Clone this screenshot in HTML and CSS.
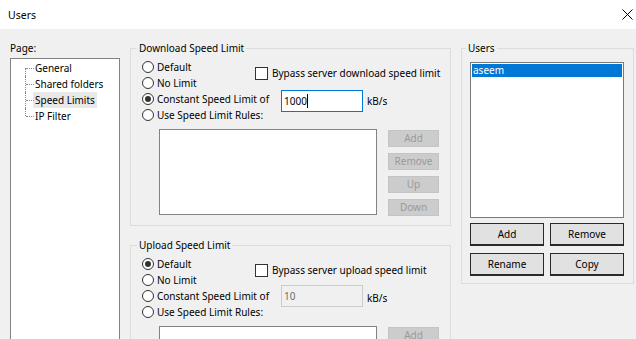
FILE: index.html
```html
<!DOCTYPE html>
<html>
<head>
<meta charset="utf-8">
<title>Users</title>
<link rel="stylesheet" href="styles.css">
</head>
<body>
<div class="window">
  <div class="titlebar">
    <span class="title">Users</span>
    <svg class="close" width="11" height="11" viewBox="0 0 11 11"><path d="M0.5 0.5 L10.5 10.5 M10.5 0.5 L0.5 10.5" stroke="#000" stroke-width="1" fill="none"/></svg>
  </div>
  <div class="main">
    <div class="pagecol">
      <div class="pagelabel">Page:</div>
      <div class="tree">
        <ul>
          <li><span>General</span></li>
          <li><span>Shared folders</span></li>
          <li><span class="sel">Speed Limits</span></li>
          <li><span>IP Filter</span></li>
        </ul>
      </div>
    </div>
    <div class="midcol">
      <fieldset class="group speed">
        <legend>Download Speed Limit</legend>
        <div class="opts">
          <label class="radio r1"><span class="dot"></span>Default</label>
          <label class="radio r2"><span class="dot"></span>No Limit</label>
          <label class="radio r3"><span class="dot on"></span>Constant Speed Limit of</label>
          <label class="radio r4"><span class="dot"></span>Use Speed Limit Rules:</label>
          <label class="check"><span class="box"></span>Bypass server download speed limit</label>
          <div class="input focus"><span class="caret">1000</span></div>
          <span class="unit">kB/s</span>
        </div>
        <div class="rules">
          <div class="list"></div>
          <div class="sidebtns">
            <div class="dbtn">Add</div>
            <div class="dbtn">Remove</div>
            <div class="dbtn">Up</div>
            <div class="dbtn">Down</div>
          </div>
        </div>
      </fieldset>
      <fieldset class="group speed up">
        <legend>Upload Speed Limit</legend>
        <div class="opts">
          <label class="radio r1"><span class="dot on"></span>Default</label>
          <label class="radio r2"><span class="dot"></span>No Limit</label>
          <label class="radio r3"><span class="dot"></span>Constant Speed Limit of</label>
          <label class="radio r4"><span class="dot"></span>Use Speed Limit Rules:</label>
          <label class="check"><span class="box"></span>Bypass server upload speed limit</label>
          <div class="input disabled">10</div>
          <span class="unit">kB/s</span>
        </div>
        <div class="rules">
          <div class="list"></div>
          <div class="sidebtns">
            <div class="dbtn">Add</div>
            <div class="dbtn">Remove</div>
            <div class="dbtn">Up</div>
            <div class="dbtn">Down</div>
          </div>
        </div>
      </fieldset>
    </div>
    <div class="rightcol">
      <fieldset class="group users">
        <legend>Users</legend>
        <div class="userlist">
          <div class="item selected">aseem</div>
        </div>
        <div class="ubtns">
          <div class="btn">Add</div>
          <div class="btn">Remove</div>
          <div class="btn">Rename</div>
          <div class="btn">Copy</div>
        </div>
      </fieldset>
    </div>
  </div>
</div>
</body>
</html>
```
FILE: styles.css
```css
* { box-sizing: border-box; }
html, body {
  margin: 0;
  padding: 0;
  width: 636px;
  height: 339px;
  overflow: hidden;
  background: #f0f0f0;
}
body {
  font-family: "Noto Sans", "Open Sans", sans-serif;
  font-size: 10px;
  line-height: 14px;
  color: #000;
}
.window { width: 636px; height: 339px; overflow: hidden; }

.titlebar {
  height: 29px;
  background: #fff;
  display: flex;
  align-items: center;
  justify-content: space-between;
  padding: 0 3px 0 8px;
}
.title { font-size: 10.5px; margin-top: 1px; }
.close { margin-top: -1px; }

.main {
  display: flex;
  padding: 12px 0 0 10px;
}

/* left column */
.pagecol { width: 110px; }
.pagelabel { height: 14px; }
.tree {
  margin-top: 3px;
  height: 300px;
  background: #fff;
  border: 1px solid #828282;
  padding-top: 1px;
}
.tree ul { list-style: none; margin: 0; padding: 0; }
.tree li {
  position: relative;
  height: 16px;
  line-height: 16px;
  padding-left: 22px;
}
.tree li span { padding: 1px 2px; }
.tree li span.sel { background: #e8e8e8; }
.tree li::before {
  content: "";
  position: absolute;
  left: 14px;
  top: 0;
  height: 16px;
  border-left: 1px dotted #8a8a8a;
}
.tree li:first-child::before { top: 8px; height: 8px; }
.tree li:last-child::before { height: 8px; }
.tree li::after {
  content: "";
  position: absolute;
  left: 15px;
  top: 8px;
  width: 8px;
  border-top: 1px dotted #8a8a8a;
}

/* group boxes */
fieldset.group {
  margin: 0;
  padding: 0;
  border: 1px solid #dcdcdc;
  min-width: 0;
}
fieldset.group legend {
  padding: 0 2px;
  margin-left: 6px;
  line-height: 14px;
}

.midcol { width: 321px; margin-left: 10px; }
.speed { padding: 4px 0 9px 0 !important; }
.speed.up { margin-top: 12px !important; }

.opts {
  display: grid;
  grid-template-columns: 113px 26px 82px auto;
  grid-template-rows: repeat(4, 16px);
  padding-left: 11px;
  align-items: center;
}
.radio {
  display: flex;
  align-items: center;
  white-space: nowrap;
  grid-column: 1 / 3;
}
.r1 { grid-row: 1; }
.r2 { grid-row: 2; }
.r3 { grid-row: 3; }
.r4 { grid-row: 4; }
.dot {
  width: 12px;
  height: 12px;
  border: 1px solid #333;
  border-radius: 50%;
  background: #fff;
  margin-right: 3px;
  flex: none;
  display: flex;
  align-items: center;
  justify-content: center;
}
.dot.on::after {
  content: "";
  width: 6px;
  height: 6px;
  border-radius: 50%;
  background: #333;
}
.check {
  grid-row: 1 / 3;
  grid-column: 2 / 5;
  align-self: start;
  margin-top: 7px;
  display: flex;
  align-items: center;
  white-space: nowrap;
}
.box {
  width: 13px;
  height: 13px;
  border: 1px solid #333;
  background: #fff;
  margin-right: 4px;
  flex: none;
}
.input {
  grid-row: 3;
  grid-column: 3;
  align-self: start;
  height: 22px;
  margin-top: -1px;
  padding: 3px 2px;
  line-height: 14px;
  background: #fff;
}
.input.focus { border: 1px solid #0078d7; }
.input.disabled {
  border: 1px solid #cccccc;
  background: #f0f0f0;
  color: #6d6d6d;
  margin-top: -3px;
}
.caret { border-right: 1px solid #000; padding-right: 0; }
.unit {
  grid-row: 3;
  grid-column: 4;
  margin-left: 4px;
  margin-top: 3px;
}

.rules {
  display: flex;
  margin-top: 6px;
  padding-left: 28px;
}
.list {
  width: 218px;
  height: 86px;
  background: #fff;
  border: 1px solid #828282;
}
.sidebtns {
  display: flex;
  flex-direction: column;
  gap: 6px;
  margin-left: 11px;
  margin-top: 1px;
}
.dbtn {
  width: 51px;
  height: 17px;
  background: #cccccc;
  border: 1px solid #c4c4c4;
  color: #9a9a9a;
  text-align: center;
  line-height: 15px;
}

/* right column */
.rightcol { width: 173px; margin-left: 10px; }
.users { padding: 7px 0 7px 8px !important; height: 243px; }
.users legend { margin-left: -4px !important; }
.userlist {
  width: 154px;
  height: 156px;
  background: #fff;
  border: 1px solid #7a7a7a;
  padding: 1px;
}
.item { height: 13px; line-height: 13px; padding-left: 1px; }
.item.selected { background: #0078d7; color: #fff; }
.ubtns {
  display: grid;
  grid-template-columns: 74px 74px;
  grid-auto-rows: 23px;
  column-gap: 6px;
  row-gap: 7px;
  margin-top: 5px;
}
.btn {
  background: #e1e1e1;
  border: 1px solid #2a2a2a;
  border-bottom-width: 2px;
  text-align: center;
  line-height: 20px;
}
```
